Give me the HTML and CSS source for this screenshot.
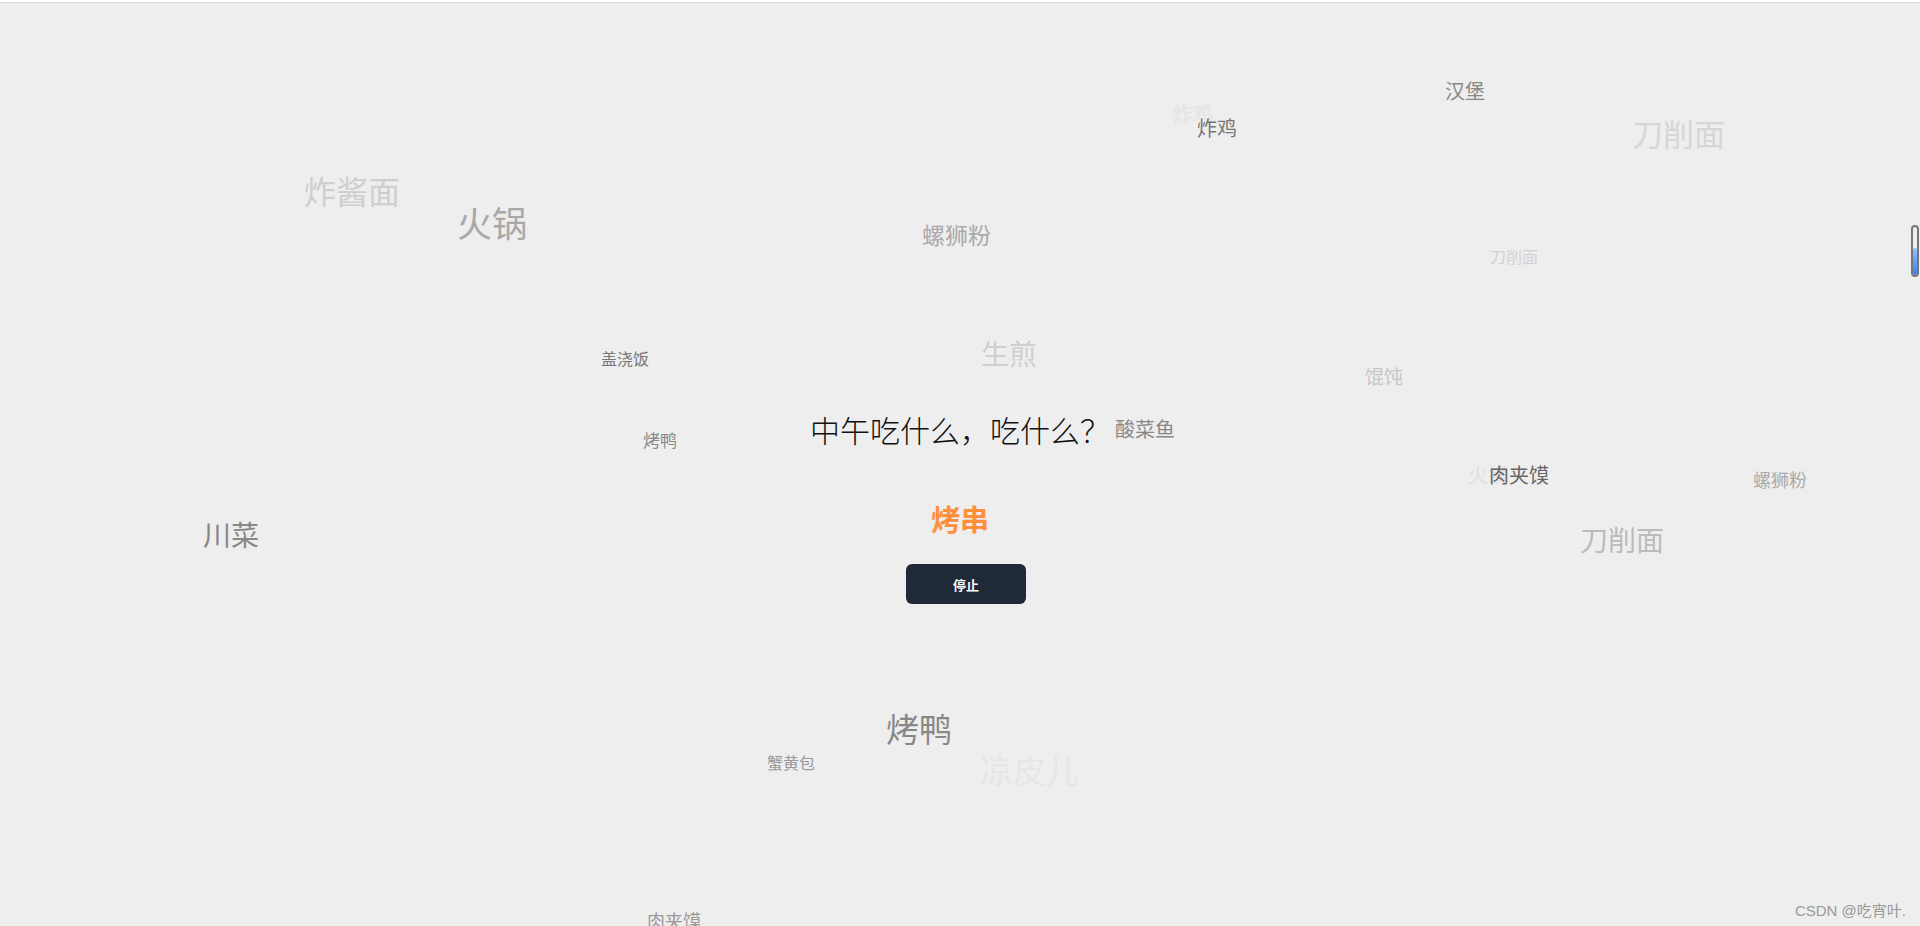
FILE: index.html
```html
<!DOCTYPE html>
<html lang="zh-CN">
<head>
  <meta charset="UTF-8">
  <meta name="viewport" content="width=device-width, initial-scale=1.0">
  <title>中午吃什么</title>
  <link rel="stylesheet" href="styles.css">
</head>
<body>
  <div class="topbar"></div>

  <!-- 漂浮的菜名 -->
  <div class="cloud">
    <span class="food" style="left:1445px;top:81px;font-size:20px;color:#888">汉堡</span>
    <span class="food" style="left:1173px;top:104px;font-size:20px;color:#e3e3e3">炸鸡</span>
    <span class="food" style="left:1197px;top:118px;font-size:20px;color:#777">炸鸡</span>
    <span class="food" style="left:1632px;top:117px;font-size:31px;color:#d6d6d6">刀削面</span>
    <span class="food" style="left:304px;top:174px;font-size:32px;color:#cfcfcf">炸酱面</span>
    <span class="food" style="left:457px;top:204px;font-size:35px;color:#a8a8a8">火锅</span>
    <span class="food" style="left:922px;top:223px;font-size:23px;color:#aaa">螺狮粉</span>
    <span class="food" style="left:1490px;top:248px;font-size:16px;color:#d2d2d2">刀削面</span>
    <span class="food" style="left:601px;top:350px;font-size:16px;color:#777">盖浇饭</span>
    <span class="food" style="left:981px;top:339px;font-size:28px;color:#cfcfcf">生煎</span>
    <span class="food" style="left:1365px;top:366px;font-size:19px;color:#c6c6c6">馄饨</span>
    <span class="food" style="left:643px;top:431px;font-size:17px;color:#888">烤鸭</span>
    <span class="food" style="left:1115px;top:419px;font-size:20px;color:#888">酸菜鱼</span>
    <span class="food" style="left:1468px;top:465px;font-size:20px;color:#e0e0e0">火锅</span>
    <span class="food" style="left:1489px;top:465px;font-size:20px;color:#666">肉夹馍</span>
    <span class="food" style="left:1753px;top:470px;font-size:18px;color:#aaa">螺狮粉</span>
    <span class="food" style="left:203px;top:520px;font-size:28px;color:#888">川菜</span>
    <span class="food" style="left:1580px;top:525px;font-size:28px;color:#bbb">刀削面</span>
    <span class="food" style="left:886px;top:712px;font-size:33px;color:#888">烤鸭</span>
    <span class="food" style="left:767px;top:754px;font-size:16px;color:#999">蟹黄包</span>
    <span class="food" style="left:980px;top:753px;font-size:33px;color:#e6e6e6">凉皮儿</span>
    <span class="food" style="left:647px;top:911px;font-size:18px;color:#999">肉夹馍</span>
  </div>

  <main class="picker">
    <h1 class="question">中午吃什么，吃什么？</h1>
    <div class="pick" id="pick">烤串</div>
    <button class="stop-btn" id="stopBtn">停止</button>
  </main>

  <div class="slider"><div class="slider-fill"></div></div>
  <div class="watermark">CSDN @吃宵叶.</div>
</body>
</html>
```

FILE: styles.css
```css
html, body {
  margin: 0;
  padding: 0;
}
body {
  background: #eeeeee;
  font-family: "Noto Sans CJK SC", "Microsoft YaHei", sans-serif;
  height: 926px;
  overflow: hidden;
  position: relative;
}
.topbar {
  height: 2px;
  background: #fff;
  border-bottom: 1px solid #d9d9d9;
}
.cloud {
  position: absolute;
  inset: 0;
}
.food {
  position: absolute;
  line-height: 1;
  white-space: nowrap;
}
.picker {
  position: relative;
  display: flex;
  flex-direction: column;
  align-items: center;
  padding-top: 411px;
}
.question {
  margin: 0;
  font-size: 30px;
  font-weight: 300;
  line-height: 1;
  color: #111;
}
.pick {
  margin-top: 60px;
  font-size: 29px;
  font-weight: bold;
  line-height: 1;
  color: #ff8f3a;
}
.stop-btn {
  margin: 31px 0 0 12px;
  width: 120px;
  height: 40px;
  background: #1f2937;
  color: #fff;
  border: none;
  border-radius: 6px;
  font-family: inherit;
  font-size: 13px;
  font-weight: bold;
  cursor: pointer;
}
.slider {
  position: absolute;
  left: 1911px;
  top: 225px;
  width: 4px;
  height: 48px;
  border: 2px solid #777;
  border-radius: 4px;
  display: flex;
  align-items: flex-end;
}
.slider-fill {
  width: 100%;
  height: 56%;
  background: linear-gradient(#8cc0ff, #3a82f0);
  border-radius: 2px;
}
.watermark {
  position: absolute;
  right: 14px;
  bottom: 8px;
  font-family: "Liberation Sans", "Noto Sans CJK SC", sans-serif;
  font-size: 15px;
  color: #999;
  line-height: 1;
}
```
